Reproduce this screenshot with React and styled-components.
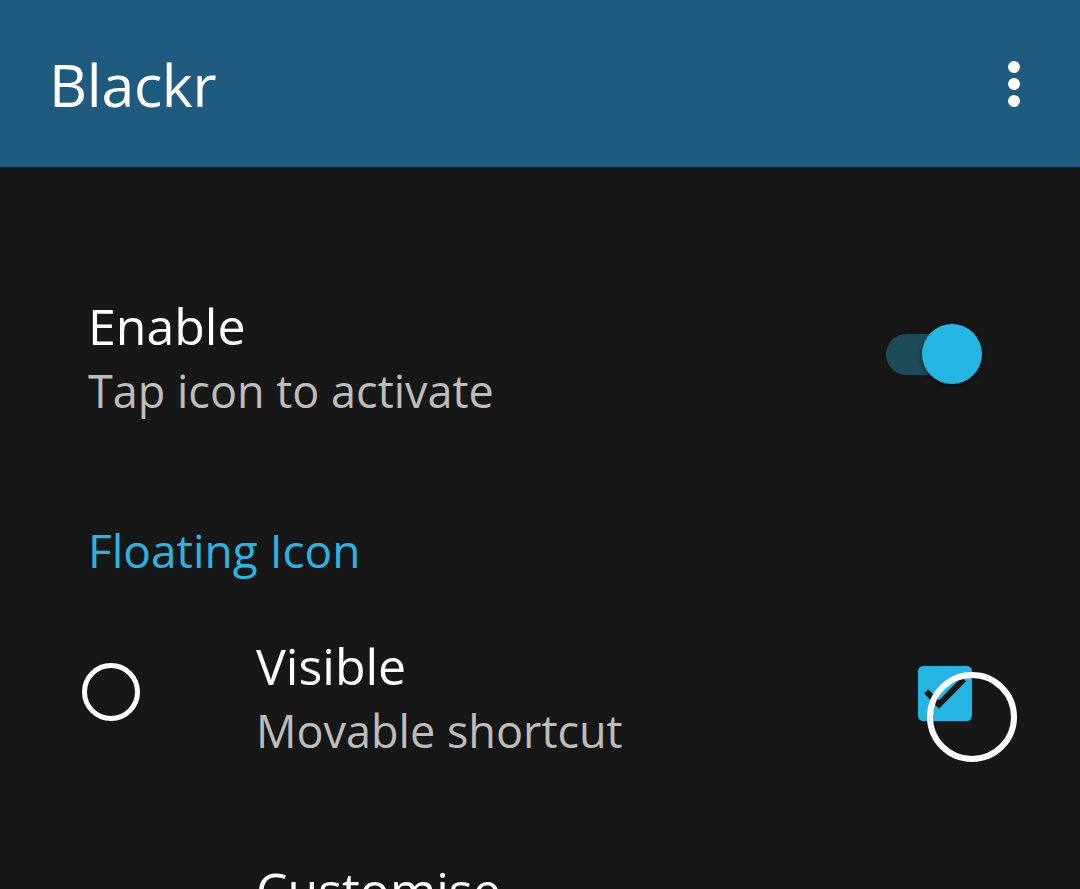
import styled, { createGlobalStyle } from "styled-components";

const Global = createGlobalStyle`
  html, body {
    margin: 0;
    padding: 0;
    background: #171717;
    font-family: "Open Sans", "Noto Sans", sans-serif;
    overflow: hidden;
  }
`;

const Page = styled.div`
  width: 1080px;
  height: 889px;
  background: #171717;
  position: relative;
  overflow: hidden;
`;

const Toolbar = styled.header`
  display: flex;
  align-items: center;
  justify-content: space-between;
  height: 167px;
  padding: 0 60px 0 49px;
  box-sizing: border-box;
  background: #1e5b7e;
  color: #fff;
`;

const Title = styled.h1`
  margin: 0;
  font-size: 59px;
  font-weight: 400;
  letter-spacing: -0.3px;
`;

const MenuDots = styled.div`
  display: flex;
  flex-direction: column;
  gap: 5px;
  & > span {
    width: 12px;
    height: 12px;
    border-radius: 50%;
    background: #fff;
  }
`;

const List = styled.div`
  display: flex;
  flex-direction: column;
  padding-top: 127px;
`;

const Row = styled.div`
  display: flex;
  align-items: center;
  padding: 0 ${p => p.$right || 98}px 0 ${p => p.$indent || 88}px;
  margin-top: ${p => p.$top || 0}px;
`;

const Texts = styled.div`
  flex: 1;
  display: flex;
  flex-direction: column;
`;

const Primary = styled.div`
  color: #fff;
  font-size: 50px;
  line-height: 64px;
  white-space: nowrap;
`;

const Secondary = styled.div`
  color: #bdbdbd;
  font-size: 45px;
  line-height: 62px;
  margin-top: 2px;
  white-space: nowrap;
`;

const Category = styled.div`
  color: #2bb4e0;
  font-size: 46px;
  padding-left: 88px;
  margin-top: 98px;
  line-height: 60px;
`;

const Switch = styled.div`
  position: relative;
  width: 96px;
  height: 60px;
  margin-top: -8px;
  &::before {
    content: "";
    position: absolute;
    left: 0;
    top: 10px;
    width: 78px;
    height: 41px;
    border-radius: 21px;
    background: #1d4b5a;
  }
  &::after {
    content: "";
    position: absolute;
    right: 0;
    top: 0;
    width: 60px;
    height: 60px;
    border-radius: 50%;
    background: #24b5e3;
    box-shadow: 0 2px 4px rgba(0, 0, 0, 0.5);
  }
`;

const Checkbox = styled.svg`
  display: block;
  width: 54px;
  height: 55px;
  margin-top: -9px;
`;

const Touch = styled.div`
  position: absolute;
  left: ${p => p.$x}px;
  top: ${p => p.$y}px;
  width: ${p => p.$d}px;
  height: ${p => p.$d}px;
  border: ${p => p.$w}px solid #fff;
  border-radius: 50%;
  box-sizing: border-box;
  transform: translate(-50%, -50%);
`;

export default function App() {
  return (
    <Page>
      <Global />
      <Toolbar>
        <Title>Blackr</Title>
        <MenuDots>
          <span />
          <span />
          <span />
        </MenuDots>
      </Toolbar>
      <List>
        <Row>
          <Texts>
            <Primary>Enable</Primary>
            <Secondary>Tap icon to activate</Secondary>
          </Texts>
          <Switch />
        </Row>
        <Category>Floating Icon</Category>
        <Row $indent={256} $right={108} $top={54}>
          <Texts>
            <Primary>Visible</Primary>
            <Secondary>Movable shortcut</Secondary>
          </Texts>
          <Checkbox viewBox="3 3 18 18" preserveAspectRatio="none">
            <rect x="3" y="3" width="18" height="18" rx="1.7" fill="#24b5e3" />
            <path d="M10 17l-5-5 1.41-1.41L10 14.17l7.59-7.59L19 8l-9 9z" fill="#171717" />
          </Checkbox>
        </Row>
        <Row $indent={256} $top={96}>
          <Texts>
            <Primary>Customise</Primary>
          </Texts>
        </Row>
      </List>
      <Touch $x={111} $y={692} $d={58} $w={5} />
      <Touch $x={972} $y={717} $d={90} $w={6} />
    </Page>
  );
}
